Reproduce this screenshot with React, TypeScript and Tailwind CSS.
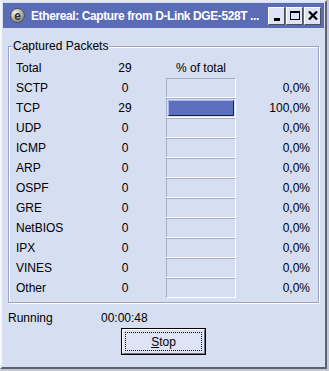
import React from 'react';

const rows: { name: string; count: string; pct: string; fill: boolean }[] = [
  { name: 'SCTP', count: '0', pct: '0,0%', fill: false },
  { name: 'TCP', count: '29', pct: '100,0%', fill: true },
  { name: 'UDP', count: '0', pct: '0,0%', fill: false },
  { name: 'ICMP', count: '0', pct: '0,0%', fill: false },
  { name: 'ARP', count: '0', pct: '0,0%', fill: false },
  { name: 'OSPF', count: '0', pct: '0,0%', fill: false },
  { name: 'GRE', count: '0', pct: '0,0%', fill: false },
  { name: 'NetBIOS', count: '0', pct: '0,0%', fill: false },
  { name: 'IPX', count: '0', pct: '0,0%', fill: false },
  { name: 'VINES', count: '0', pct: '0,0%', fill: false },
  { name: 'Other', count: '0', pct: '0,0%', fill: false },
];

const TitleButton: React.FC<{ children: React.ReactNode }> = ({ children }) => (
  <div className="w-[17px] h-[18px] bg-[#dfe4f4] border border-t-white border-l-white border-r-[#4a5060] border-b-[#4a5060] flex items-center justify-center">
    {children}
  </div>
);

export default function App() {
  return (
    <div className="w-[329px] h-[371px] bg-[#c4c8d4]">
      <div
        className="w-[327px] h-[369px] bg-[#d6def2] border-t-[2px] border-l-[2px] border-r-[2px] border-b-[2px] border-t-[#e4e8f4] border-l-[#f4f6fc] border-r-[#5c6270] border-b-[#5c6270] flex flex-col text-[12px] text-black"
        style={{ fontFamily: '"Liberation Sans", Arial, sans-serif' }}
      >
        {/* title bar */}
        <div className="ml-[1px] mr-[1px] mt-[1px] h-[25px] bg-[#5b6cb7] flex items-center pl-[7px] pr-[3px]">
          <div className="w-[15px] h-[15px] rounded-full bg-[radial-gradient(circle_at_35%_30%,#f4f4f4,#a0a0a0_60%,#606060)] border border-[#505050] flex items-center justify-center text-[12px] leading-none font-bold text-[#303030]">
            e
          </div>
          <div className="ml-[6px] flex-1 text-white font-bold text-[12px] tracking-[-0.4px] whitespace-nowrap overflow-hidden">
            Ethereal: Capture from D-Link DGE-528T ...
          </div>
          <div className="flex gap-[1px]">
            <TitleButton>
              <div className="w-[6px] h-[3px] bg-black mt-[8px]" />
            </TitleButton>
            <TitleButton>
              <div className="w-[10px] h-[9px] border border-black border-t-[2px]" />
            </TitleButton>
            <TitleButton>
              <svg width="10" height="9" viewBox="0 0 10 9">
                <path d="M1 0.5 L9 8.5 M9 0.5 L1 8.5" stroke="black" strokeWidth="2.2" />
              </svg>
            </TitleButton>
          </div>
        </div>

        {/* body */}
        <div className="flex-1 flex flex-col pl-[6px] pr-[6px] pt-[18px]">
          <div className="relative border border-[#9aa4c2] shadow-[inset_1px_1px_0_#ffffff,1px_1px_0_#ffffff] pt-[11px] pb-[4px] pl-[7px] pr-[8px]">
            <div className="absolute -top-[8px] left-[3px] bg-[#d6def2] px-[1px] leading-[14px]">Captured Packets</div>
            <div className="flex h-[20px] items-center">
              <div className="w-[90px]">Total</div>
              <div className="w-[38px] text-center">29</div>
              <div className="w-[22px]" />
              <div className="w-[70px] text-center">% of total</div>
            </div>
            {rows.map((r) => (
              <div key={r.name} className="flex h-[20px] items-center">
                <div className="w-[90px]">{r.name}</div>
                <div className="w-[38px] text-center">{r.count}</div>
                <div className="w-[22px]" />
                <div className="w-[70px] h-[20px] border border-t-[#a4acc6] border-l-[#a4acc6] border-r-white border-b-white flex">
                  {r.fill && (
                    <div className="flex-1 m-[1px] bg-[#5d70c0] border border-t-[#a8b4e8] border-l-[#a8b4e8] border-r-[#1a1e40] border-b-[#1a1e40]" />
                  )}
                </div>
                <div className="flex-1 text-right">{r.pct}</div>
              </div>
            ))}
          </div>

          <div className="flex mt-[8px] h-[14px] items-center">
            <div className="w-[93px]">Running</div>
            <div>00:00:48</div>
          </div>

          <div className="flex justify-center mt-[3px]">
            <div className="w-[85px] h-[27px] border border-black bg-[#dfe4f4] flex">
              <div className="flex-1 border border-t-white border-l-white border-r-[#6a7080] border-b-[#6a7080] p-[2px] flex">
                <div className="flex-1 border border-dotted border-black flex items-center justify-center">
                  <span>
                    <span className="underline">S</span>top
                  </span>
                </div>
              </div>
            </div>
          </div>
        </div>
      </div>
    </div>
  );
}
